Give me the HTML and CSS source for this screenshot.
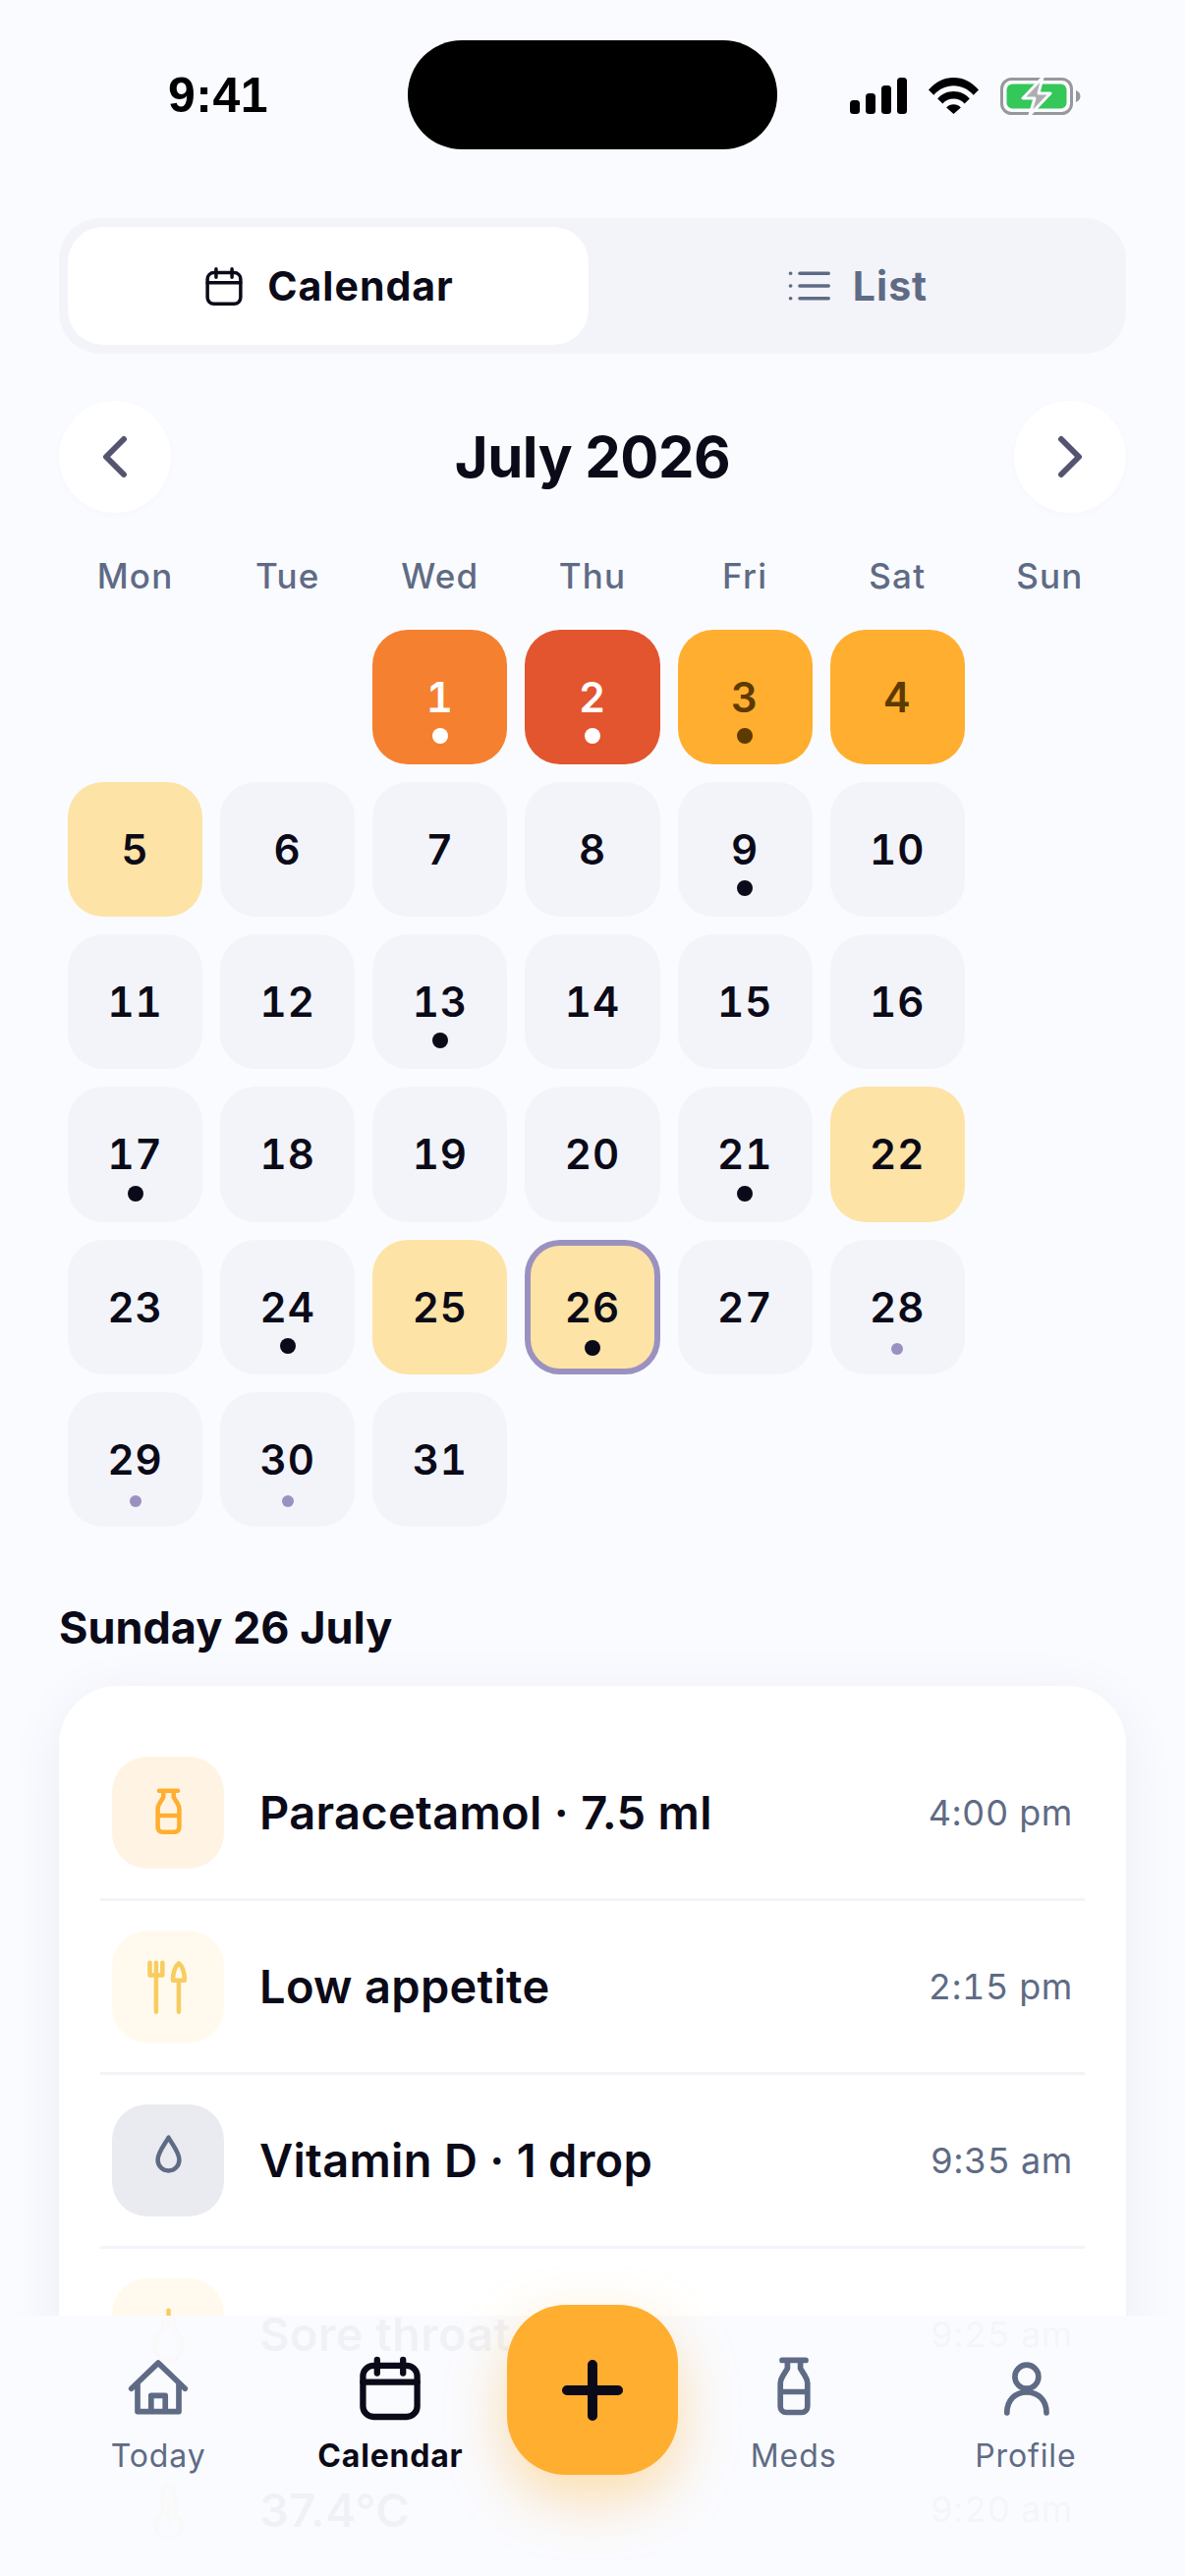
FILE: index.html
```html
<!DOCTYPE html>
<html lang="en">
<head>
<meta charset="utf-8">
<title>Calendar</title>
<link rel="stylesheet" href="styles.css">
</head>
<body>
<svg class="defs" width="0" height="0" aria-hidden="true">
  <symbol id="i-calendar" viewBox="0 0 24 24"><rect x="2.8" y="4.6" width="18.4" height="17.4" rx="3.6"/><path d="M7.6 2.6v4.6M16.4 2.6v4.6M2.8 10.2h18.4"/></symbol>
  <symbol id="i-list" viewBox="0 0 24 24"><path d="M6.500 5h16M6.500 12h16M6.500 19h16M1.300 5h.2M1.300 12h.2M1.300 19h.2"/></symbol>
  <symbol id="i-home" viewBox="0 0 24 24"><path d="M2.9 12.4 12 3.7l9.1 8.7M5 10.6v9.6h14v-9.6M9.6 20.2v-5.4h4.8v5.4"/></symbol>
  <symbol id="i-bottle" viewBox="0 0 24 24"><path d="M8 2.8h8M9.8 2.8v2.8L8.2 8.2Q7.4 9.4 7.4 10.6v7.9a2 2 0 0 0 2 2h5.2a2 2 0 0 0 2-2v-7.9q0-1.2-.8-2.4l-1.6-2.6V2.8M7.4 13.5h9.2"/></symbol>
  <symbol id="i-user" viewBox="0 0 24 24"><circle cx="12.3" cy="8.4" r="4"/><path d="M5.6 20.6c0-4.2 2.8-7 6.7-7s6.7 2.8 6.7 7"/></symbol>
  <symbol id="i-cutlery" viewBox="0 0 24 24"><path d="M6.700 2v21M4 2v5.200M9.400 2v5.200M4 7.400h5.400"/><path d="M16.400 2.200c-1.600 1.400-2.500 3.700-2.500 7.400h5c0-3.700-.9-6-2.500-7.400ZM16.400 9.600V23"/></symbol>
  <symbol id="i-drop" viewBox="0 0 24 24"><path d="M12 2.4C10.6 5 7.4 8.6 7.4 12a4.6 4.6 0 0 0 9.2 0C16.6 8.6 13.4 5 12 2.4Z"/></symbol>
  <symbol id="i-throat" viewBox="0 0 24 24"><path d="M12 2v6.500M9.600 6v3.200c0 1.800-3.600 3-3.600 8a6 6 0 0 0 12 0c0-5-3.600-6.200-3.600-8V6"/></symbol>
  <symbol id="i-thermo" viewBox="0 0 24 24"><path d="M14.600 14.200V4.400a2.600 2.600 0 0 0-5.200 0v9.800a5.400 5.400 0 1 0 5.200 0Z"/><path d="M12 9v8.600"/></symbol>
</svg>

<header class="status">
  <div class="clock">9:41</div>
  <div class="island"></div>
  <div class="status-icons">
    <svg class="signal" viewBox="0 0 58 37"><rect x="0" y="23" width="10" height="14" rx="3.5"/><rect x="16" y="16" width="10" height="21" rx="3.5"/><rect x="32" y="8" width="10" height="29" rx="3.5"/><rect x="48" y="0" width="10" height="37" rx="3.5"/></svg>
    <svg class="wifi" viewBox="0 0 51 37"><path d="M0 12.500C6.800 4.600 15.600 0 25.500 0S44.200 4.600 51 12.500l-5.300 5.200C40.300 11.700 33.300 8.200 25.500 8.200S10.700 11.700 5.300 17.700Z"/><path d="M9.200 21.400c4-4.700 9.800-7.400 16.300-7.400s12.300 2.700 16.300 7.400l-5.200 5.200c-2.800-3.300-6.700-5-11.100-5s-8.300 1.700-11.100 5Z"/><path d="M18.200 30.500c1.800-2 4.400-3.200 7.300-3.200s5.500 1.200 7.300 3.200L25.500 37Z"/></svg>
    <svg class="battery" viewBox="0 0 82 40">
      <rect x="1.500" y="2.500" width="71" height="35" rx="10" fill="none" stroke="#98989c" stroke-width="3"/>
      <path d="M77 14v12c2.800-1 4.500-3.300 4.500-6S79.800 15 77 14Z" fill="#98989c"/>
      <rect x="6.500" y="7.500" width="61" height="25" rx="6" fill="#34c759"/>
      <path d="M43 1 23 22h12l-5 17 21-22H39Z" fill="#aeaeb2" stroke="#fafbff" stroke-width="3" stroke-linejoin="round"/>
    </svg>
  </div>
</header>

<main class="screen">
  <div class="segmented">
    <div class="segment segment-on"><svg class="seg-icon ink"><use href="#i-calendar"/></svg>Calendar</div>
    <div class="segment segment-off"><svg class="seg-icon slate"><use href="#i-list"/></svg>List</div>
  </div>

  <div class="month-bar">
    <button class="round-btn"><svg class="chev" viewBox="0 0 30 44"><path d="M24 4 6 22l18 18"/></svg></button>
    <h1 class="month-title">July 2026</h1>
    <button class="round-btn"><svg class="chev" viewBox="0 0 30 44"><path d="M6 4l18 18L6 40"/></svg></button>
  </div>

  <div class="weekdays">
    <span>Mon</span><span>Tue</span><span>Wed</span><span>Thu</span><span>Fri</span><span>Sat</span><span>Sun</span>
  </div>

  <div class="days">
    <div class="day day-blank"></div><div class="day day-blank"></div>
    <div class="day heat-4">1<i class="dot"></i></div>
    <div class="day heat-5">2<i class="dot"></i></div>
    <div class="day heat-3">3<i class="dot"></i></div>
    <div class="day heat-3">4</div>
    <div class="day day-blank"></div>

    <div class="day heat-1">5</div>
    <div class="day">6</div>
    <div class="day">7</div>
    <div class="day">8</div>
    <div class="day">9<i class="dot"></i></div>
    <div class="day">10</div>
    <div class="day day-blank"></div>

    <div class="day">11</div>
    <div class="day">12</div>
    <div class="day">13<i class="dot"></i></div>
    <div class="day">14</div>
    <div class="day">15</div>
    <div class="day">16</div>
    <div class="day day-blank"></div>

    <div class="day">17<i class="dot"></i></div>
    <div class="day">18</div>
    <div class="day">19</div>
    <div class="day">20</div>
    <div class="day">21<i class="dot"></i></div>
    <div class="day heat-1">22</div>
    <div class="day day-blank"></div>

    <div class="day">23</div>
    <div class="day">24<i class="dot"></i></div>
    <div class="day heat-1">25</div>
    <div class="day heat-1 day-selected">26<i class="dot"></i></div>
    <div class="day">27</div>
    <div class="day">28<i class="dot dot-soft"></i></div>
    <div class="day day-blank"></div>

    <div class="day">29<i class="dot dot-soft"></i></div>
    <div class="day">30<i class="dot dot-soft"></i></div>
    <div class="day">31</div>
  </div>

  <h2 class="day-heading">Sunday 26 July</h2>

  <section class="log-card">
    <div class="log-row">
      <div class="tile tile-orange"><svg class="tile-icon stroke-orange"><use href="#i-bottle"/></svg></div>
      <div class="log-name">Paracetamol · 7.5 ml</div>
      <div class="log-time">4:00 pm</div>
    </div>
    <div class="log-row">
      <div class="tile tile-yellow"><svg class="tile-icon stroke-yellow"><use href="#i-cutlery"/></svg></div>
      <div class="log-name">Low appetite</div>
      <div class="log-time">2:15 pm</div>
    </div>
    <div class="log-row">
      <div class="tile tile-slate"><svg class="tile-icon slate"><use href="#i-drop"/></svg></div>
      <div class="log-name">Vitamin D · 1 drop</div>
      <div class="log-time">9:35 am</div>
    </div>
    <div class="log-row">
      <div class="tile tile-yellow"><svg class="tile-icon stroke-yellow"><use href="#i-throat"/></svg></div>
      <div class="log-name">Sore throat</div>
      <div class="log-time">9:25 am</div>
    </div>
    <div class="log-row">
      <div class="tile tile-yellow"><svg class="tile-icon stroke-yellow"><use href="#i-thermo"/></svg></div>
      <div class="log-name">37.4°C</div>
      <div class="log-time">9:20 am</div>
    </div>
  </section>
</main>

<nav class="tabbar">
  <div class="tab"><svg class="tab-icon slate"><use href="#i-home"/></svg><span>Today</span></div>
  <div class="tab tab-on"><svg class="tab-icon ink"><use href="#i-calendar"/></svg><span>Calendar</span></div>
  <button class="fab"><svg class="fab-plus" viewBox="0 0 72 72"><path d="M10 36h52M36 10v52"/></svg></button>
  <div class="tab"><svg class="tab-icon slate"><use href="#i-bottle"/></svg><span>Meds</span></div>
  <div class="tab"><svg class="tab-icon slate"><use href="#i-user"/></svg><span>Profile</span></div>
</nav>
</body>
</html>
```

FILE: styles.css
```css
* { box-sizing: border-box; }

html, body {
  margin: 0;
  padding: 0;
}

body {
  position: relative;
  width: 1206px;
  height: 2622px;
  overflow: hidden;
  background: #fafbff;
  color: #0b0a18;
  font-family: Inter, "Liberation Sans", sans-serif;
}

.defs { position: absolute; }

svg { display: block; }

/* Shared stroke colours for line icons */
.ink, .slate, .stroke-orange, .stroke-yellow {
  fill: none;
  stroke-width: 1.9;
  stroke-linecap: round;
  stroke-linejoin: round;
}
.ink { stroke: #0b0a18; }
.slate { stroke: #5f6b85; }
.stroke-orange { stroke: #ffae2f; }
.stroke-yellow { stroke: #f8cc60; }

/* Status bar */
.status {
  display: flex;
  align-items: center;
  height: 111px;
  padding-top: 0;
}

body { padding-top: 41px; }

.clock {
  width: 415px;
  padding-left: 171px;
  font-family: "Liberation Sans", sans-serif;
  font-size: 50px;
  font-weight: 700;
  letter-spacing: 0.5px;
  color: #000;
}

.island {
  width: 376px;
  height: 111px;
  border-radius: 55px;
  background: #000;
}

.status-icons {
  display: flex;
  align-items: center;
  gap: 22px;
  margin-left: 74px;
  margin-top: 2px;
}

.signal { width: 58px; height: 37px; fill: #000; }
.wifi { width: 51px; height: 37px; fill: #000; }
.battery { width: 82px; height: 40px; }

/* Screen body */
.screen {
  padding: 0 60px;
}

.segmented {
  display: flex;
  height: 138px;
  margin-top: 70px;
  padding: 9px;
  border-radius: 42px;
  background: #f3f4f9;
}

.segment {
  flex: 1;
  display: flex;
  align-items: center;
  justify-content: center;
  gap: 22px;
  font-size: 41px;
  font-weight: 700;
  letter-spacing: 1px;
  color: #5f6b85;
  border-radius: 36px;
}

.segment-off { padding-left: 10px; }

.segment-on {
  flex: none;
  width: 530px;
  background: #fff;
  color: #0b0a18;
}

.seg-icon { width: 44px; height: 44px; }

.month-bar {
  display: flex;
  align-items: center;
  justify-content: space-between;
  margin-top: 48px;
}

.round-btn {
  display: flex;
  align-items: center;
  justify-content: center;
  width: 114px;
  height: 114px;
  padding: 0;
  border: none;
  border-radius: 50%;
  background: #fff;
  box-shadow: 0 2px 8px rgba(40, 50, 110, 0.02);
}

.chev {
  width: 30px;
  height: 44px;
  fill: none;
  stroke: #555470;
  stroke-width: 6;
  stroke-linecap: round;
  stroke-linejoin: round;
}

.month-title {
  margin: 0;
  font-size: 58px;
  font-weight: 700;
  letter-spacing: -0.5px;
  color: #0b0a18;
}

.weekdays {
  display: grid;
  grid-template-columns: repeat(7, 1fr);
  gap: 18px;
  margin-top: 43px;
  padding: 0 9px;
  height: 76px;
  font-size: 35px;
  font-weight: 500;
  letter-spacing: 1.2px;
  color: #5f6b85;
  text-align: center;
}

.days {
  display: grid;
  grid-template-columns: repeat(7, 1fr);
  grid-auto-rows: 137.14px;
  gap: 18px;
  padding: 0 9px;
}

.day {
  position: relative;
  display: flex;
  align-items: center;
  justify-content: center;
  border-radius: 36px;
  background: #f3f4f9;
  font-size: 42px;
  font-weight: 600;
  font-variant-numeric: tabular-nums;
  letter-spacing: 1px;
  color: #0b0a18;
}

.day-blank { background: transparent; }

.heat-1 { background: #fde3a5; }
.heat-3 { background: #ffae2f; color: #5c3a00; }
.heat-4 { background: #f58030; color: #fff; }
.heat-5 { background: #e2552f; color: #fff; }

.day-selected { border: 6px solid #9b91c0; }

.dot {
  position: absolute;
  left: 50%;
  bottom: 21px;
  width: 16px;
  height: 16px;
  margin-left: -8px;
  border-radius: 50%;
  background: currentColor;
}

.day-selected .dot { bottom: 13px; }

.dot-soft {
  width: 12px;
  height: 12px;
  margin-left: -6px;
  bottom: 20px;
  background: #9b91c0;
}

.day-heading {
  margin: 71px 0 0;
  height: 64px;
  font-size: 45px;
  line-height: 64px;
  font-weight: 700;
  letter-spacing: 0;
}

.log-card {
  margin-top: 27px;
  padding: 42px 42px 0;
  border-radius: 60px;
  background: #fff;
  box-shadow: 0 10px 60px rgba(30, 40, 100, 0.06);
}

.log-row {
  display: flex;
  align-items: center;
  height: 177px;
  padding: 0 12px;
  border-bottom: 3px solid #f3f4f9;
}

.log-row:last-child { border-bottom: none; }

.tile {
  display: flex;
  align-items: center;
  justify-content: center;
  width: 114px;
  height: 114px;
  flex: none;
  border-radius: 36px;
}

.tile-orange { background: #fff4e3; }
.tile-yellow { background: #fffaed; }
.tile-slate { background: #e9ebf0; }

.tile-icon { width: 57px; height: 57px; }

.log-name {
  flex: 1;
  margin-left: 36px;
  font-size: 47px;
  font-weight: 600;
  letter-spacing: 0.3px;
  color: #0b0a18;
}

.log-time {
  font-size: 36px;
  font-weight: 400;
  font-variant-numeric: tabular-nums;
  letter-spacing: 0.6px;
  color: #5f6b85;
}

/* Bottom tab bar */
.tabbar {
  position: absolute;
  left: 0;
  right: 0;
  bottom: 0;
  height: 265px;
  padding: 37px 44px 0 43px;
  display: grid;
  grid-template-columns: 1fr 1fr 174px 1fr 1fr;
  align-items: start;
  background: rgba(250, 251, 255, 0.96);
}

.tab {
  display: flex;
  flex-direction: column;
  align-items: center;
  font-size: 32px;
  line-height: 40px;
  letter-spacing: 0.9px;
  color: #5f6b85;
}

.tab span { margin-top: 14px; }

.tab-on {
  color: #0b0a18;
  font-weight: 700;
  letter-spacing: 0.8px;
}

.tab-icon { width: 72px; height: 72px; }

.tab-on .tab-icon { stroke-width: 2.1; }

.fab {
  display: flex;
  align-items: center;
  justify-content: center;
  width: 174px;
  height: 173px;
  margin-top: -48px;
  padding: 0;
  border: none;
  border-radius: 60px;
  background: #ffae2f;
  box-shadow: 0 24px 60px rgba(255, 174, 47, 0.4);
}

.fab-plus {
  width: 72px;
  height: 72px;
  fill: none;
  stroke: #0b0a18;
  stroke-width: 10;
  stroke-linecap: round;
}
```
